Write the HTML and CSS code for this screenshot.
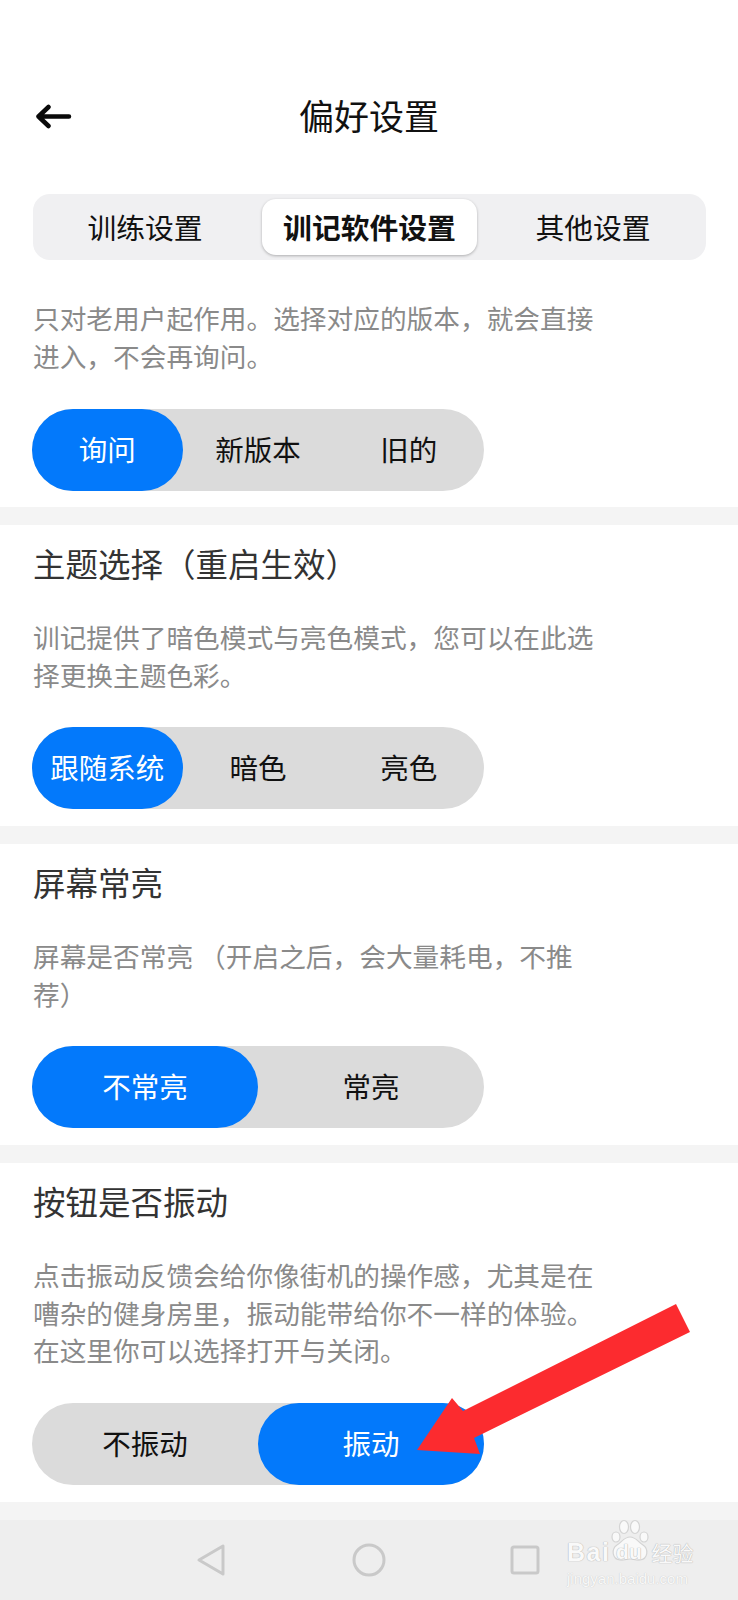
FILE: index.html
```html
<!DOCTYPE html>
<html lang="zh-CN">
<head>
<meta charset="utf-8">
<title>偏好设置</title>
<link rel="stylesheet" href="styles.css">
</head>
<body>
<div class="page">
  <div class="top">
    <header class="header">
      <svg class="back" width="38" height="26" viewBox="0 0 38 26"><path d="M35 13.500H4.500M14.500 4L4.500 13.500l10 9.500" fill="none" stroke="#0a0a0a" stroke-width="4.500" stroke-linecap="round" stroke-linejoin="round"/></svg>
      <h1 class="title">偏好设置</h1>
    </header>
    <nav class="tabs">
      <div class="tab tab-left">训练设置</div>
      <div class="tab tab-active">训记软件设置</div>
      <div class="tab tab-right">其他设置</div>
    </nav>
  </div>
  <section class="section section-first">
    <p class="desc">只对老用户起作用。选择对应的版本，就会直接<br>进入，不会再询问。</p>
    <div class="seg seg-3"><span class="opt on">询问</span><span class="opt">新版本</span><span class="opt">旧的</span></div>
  </section>
  <section class="section">
    <h2 class="name">主题选择（重启生效）</h2>
    <p class="desc">训记提供了暗色模式与亮色模式，您可以在此选<br>择更换主题色彩。</p>
    <div class="seg seg-3"><span class="opt on">跟随系统</span><span class="opt">暗色</span><span class="opt">亮色</span></div>
  </section>
  <section class="section">
    <h2 class="name">屏幕常亮</h2>
    <p class="desc">屏幕是否常亮 （开启之后，会大量耗电，不推<br>荐）</p>
    <div class="seg seg-2"><span class="opt on">不常亮</span><span class="opt">常亮</span></div>
  </section>
  <section class="section section-last">
    <h2 class="name">按钮是否振动</h2>
    <p class="desc">点击振动反馈会给你像街机的操作感，尤其是在<br>嘈杂的健身房里，振动能带给你不一样的体验。<br>在这里你可以选择打开与关闭。</p>
    <div class="seg seg-2"><span class="opt">不振动</span><span class="opt on">振动</span></div>
  </section>
  <footer class="navbar">
    <svg width="30" height="34" viewBox="0 0 30 34"><path d="M27 3v28L3 17z" fill="none" stroke="#c9c9c9" stroke-width="3" stroke-linejoin="round"/></svg>
    <svg width="34" height="34" viewBox="0 0 34 34"><circle cx="17" cy="17" r="15" fill="none" stroke="#c9c9c9" stroke-width="3"/></svg>
    <svg width="30" height="30" viewBox="0 0 30 30"><rect x="2" y="2" width="26" height="26" rx="2" fill="none" stroke="#c9c9c9" stroke-width="3"/></svg>
  </footer>
  <svg class="arrow" width="738" height="1600" viewBox="0 0 738 1600"><polygon points="417,1450 452,1398 463,1411 676,1304 690,1332 474,1438 480,1454" fill="#fc2b2f"/></svg>
  <div class="mark">
    <svg class="paw" width="40" height="44" viewBox="0 0 40 44"><g fill="#f9f9f9" stroke="#d4d4d4" stroke-width="1.200"><ellipse cx="6" cy="18" rx="4" ry="5"/><ellipse cx="14" cy="8" rx="4.500" ry="6.500"/><ellipse cx="25" cy="8" rx="4.500" ry="6.500"/><ellipse cx="34" cy="18" rx="4" ry="5"/><path d="M20 18c6 0 8 5 13 8 6 4 5 14-3 15-4 .5-7-1-10-1s-6 1.500-10 1c-8-1-9-11-3-15 5-3 7-8 13-8z"/></g></svg>
    <div class="mark-row"><span class="mark-logo">Bai</span><span class="mark-du">du</span><span class="mark-cn">经验</span></div>
    <div class="mark-url">jingyan.baidu.com</div>
  </div>
</div>
</body>
</html>
```

FILE: styles.css
```css
* { box-sizing: border-box; }
html, body { margin: 0; padding: 0; }
body { background: #fff; font-family: "Noto Sans CJK SC", "Noto Sans", sans-serif; }
.page { position: relative; width: 738px; height: 1600px; overflow: hidden; display: flex; flex-direction: column; background: #f4f4f4; }
.top { flex: none; background: #fff; padding-bottom: 39px; }
.header { position: relative; height: 194px; padding-top: 91px; }
.back { position: absolute; left: 34px; top: 103px; }
.title { margin: 0; text-align: center; font-size: 35px; line-height: 48px; font-weight: 400; color: #111; }
.tabs { display: flex; height: 66px; padding: 5px 0; background: #f0f0f2; border-radius: 17px; width: 673px; margin-left: 33px; }
.tab { display: flex; align-items: center; justify-content: center; font-size: 28.800px; color: #111; padding-bottom: 2px; }
.tab-left { flex: none; width: 229px; padding-right: 5px; }
.tab-right { flex: 1; padding-left: 3px; }
.tab-active { flex: none; width: 215px; background: #fff; border-radius: 14px; font-weight: 700; box-shadow: 0 1px 3px rgba(0,0,0,.28); }
.section { flex: none; background: #fff; padding: 16px 32px 17px; margin-bottom: 18px; }
.section-first { padding: 0 32px 16px; }
.section-last { margin-bottom: 0; }
.name { margin: 0 0 33px 1px; font-size: 32.500px; line-height: 44px; font-weight: 400; color: #333; }
.desc { margin: 0 0 34px 1px; font-size: 26.700px; line-height: 37.500px; color: #8a8a8a; white-space: nowrap; }
.section-first .desc { margin-bottom: 35px; }
.seg { display: flex; width: 452px; height: 82px; border-radius: 41px; background: #dbdbdb; }
.opt { flex: 1; display: flex; align-items: center; justify-content: center; font-size: 28.500px; color: #111; border-radius: 41px; padding-bottom: 3px; }
.opt.on { background: #0379fb; color: #fff; }
.navbar { position: absolute; left: 0; right: 0; bottom: 0; height: 80px; background: #eeeeee; display: flex; align-items: center; }
.navbar svg:nth-child(1) { margin-left: 196px; }
.navbar svg:nth-child(2) { margin-left: 126px; }
.navbar svg:nth-child(3) { margin-left: 124px; }
.arrow { position: absolute; left: 0; top: 0; pointer-events: none; }
.mark { position: absolute; left: 567px; top: 1519px; width: 135px; height: 70px; padding-top: 20px; }
.paw { position: absolute; left: 43px; top: 0; }
.mark-row { position: relative; display: flex; align-items: center; height: 26px; }
.mark-logo { font-family: "Liberation Sans", sans-serif; font-size: 25px; letter-spacing: 1.500px; line-height: 26px; font-weight: 700; color: #f9f9f9; text-shadow: 0 0 1px #b5b5b5, 0 0 1px #b5b5b5; }
.mark-du { width: 37px; text-align: center; font-family: "Liberation Sans", sans-serif; font-size: 21px; line-height: 26px; font-weight: 700; color: #f9f9f9; text-shadow: 0 0 1px #b5b5b5, 0 0 1px #b5b5b5; }
.mark-cn { font-size: 21px; line-height: 26px; margin-left: 4px; color: #f9f9f9; text-shadow: 0 0 1px #b5b5b5, 0 0 1px #b5b5b5; }
.mark-url { position: relative; font-family: "Liberation Sans", sans-serif; font-size: 15px; line-height: 18px; margin-top: 5px; white-space: nowrap; color: #f9f9f9; text-shadow: 0 0 1px #bbb; }
```
